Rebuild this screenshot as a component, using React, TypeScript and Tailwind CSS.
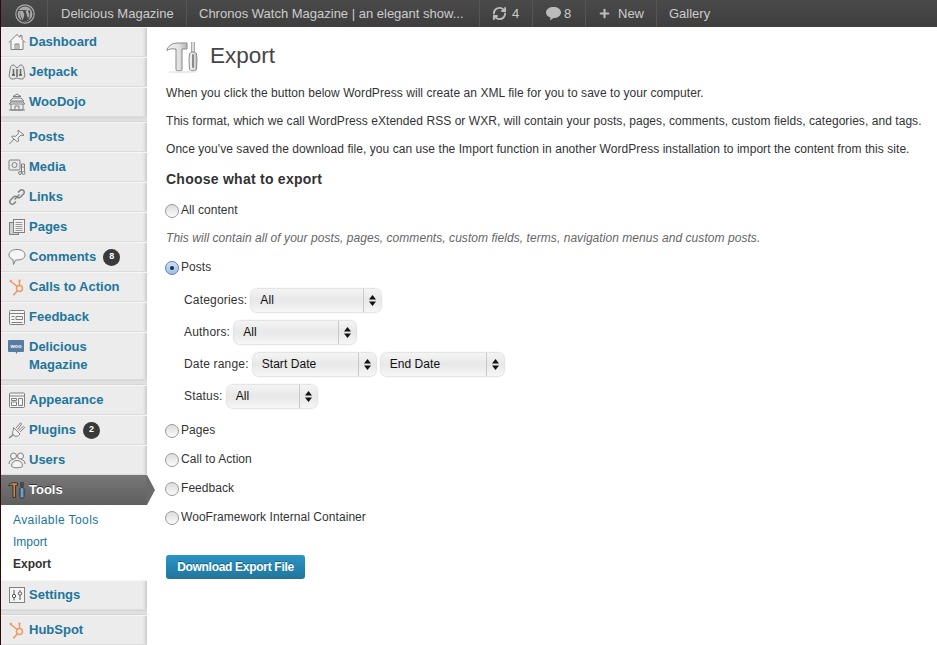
import { ReactNode } from "react";
import { RefreshCw, Plus } from "lucide-react";

const font = "[font-family:'Liberation_Sans',Arial,sans-serif]";

function WpLogo() {
  return (
    <svg width="20" height="20" viewBox="0 0 20 20" fill="none">
      <circle cx="10" cy="10" r="9.2" stroke="#a8a8a8" strokeWidth="1.2" />
      <circle cx="10" cy="10" r="7.4" fill="#a8a8a8" />
      <path d="M3.600 6.400 7.600 16.400 9.400 11 8 7l-1-.2V6h4.600v.8L10.500 7l2.600 8 1-3.500c.4-1.400 0-2.400-.5-3.300-.4-.7-.6-1.300.1-1.900.2-.2.400-.3.600-.3l1 1.600-1 8-3.800 1.800-3.800-.2z" fill="#464646" />
      <path d="M3 6.500h4.500" stroke="#464646" strokeWidth="0.8" />
    </svg>
  );
}

function Tools32() {
  return (
    <svg width="32" height="33" viewBox="0 0 32 33" fill="none">
      <defs>
        <linearGradient id="metal" x1="0" x2="1" y1="0" y2="0">
          <stop offset="0" stopColor="#f4f4f4" />
          <stop offset="0.6" stopColor="#e2e2e2" />
          <stop offset="1" stopColor="#b4b4b4" />
        </linearGradient>
      </defs>
      <path d="M1 9.500C3 5 7 3 12 3h9v6h-5v20.500c0 .8-.6 1.300-1.300 1.300h-3.400c-.7 0-1.300-.5-1.300-1.300V9H8C5.500 8.500 3 9 1 10.500z" fill="url(#metal)" stroke="#888" strokeWidth="1" />
      <path d="M25.800 2v10.500M28.200 2v10.500" stroke="#888" strokeWidth="1" />
      <path d="M23.500 14c0-1 1.500-2 3.500-2s3.500 1 3.500 2l.5 6-.5 9c0 1-1.500 1.800-3.500 1.800s-3.500-.8-3.500-1.800l-.5-9z" fill="url(#metal)" stroke="#888" strokeWidth="1" />
      <path d="M27 15v12" stroke="#8a8a8a" strokeWidth="2" strokeLinecap="round" />
      <ellipse cx="16" cy="32" rx="15" ry="0.800" fill="#e2e2e2" />
    </svg>
  );
}

const gs = { stroke: "#808080", strokeWidth: 1, fill: "none" };

const icons: Record<string, ReactNode> = {
  home: (
    <svg width="18" height="18" viewBox="0 0 18 18" {...gs}>
      <path d="M.8 9.500 9 1.500l3 2.900V2.500h2v3.800l3.200 3.200" fill="#f6f6f6" />
      <path d="M3 8v8.500h12V8" fill="#f6f6f6" />
      <path d="M7 16.500V11h4v5.500M9 11v5.500M3 16.500h12" />
    </svg>
  ),
  jetpack: (
    <svg width="18" height="18" viewBox="0 0 18 18" {...gs}>
      <path d="M2 7c0-3 1.200-5 3-5 1.500 0 2.500 1 3 2.500h2C10.500 3 11.500 2 13 2c1.800 0 3 2 3 5l1 6-2 3h-3l-3-1-3 1H3l-2-3z" fill="#e4e4e4" />
      <path d="M5.500 6v6M12.500 6v6M9 6v8" stroke="#666" strokeWidth="1.500" />
      <path d="M4 12h3M11 12h3" stroke="#555" strokeWidth="1.500" />
    </svg>
  ),
  dojo: (
    <svg width="18" height="18" viewBox="0 0 18 18" {...gs}>
      <path d="M5 3.500 9 1l4 2.500zM2 8l3-3h8l3 3zM1 11l2-2h12l2 2z" />
      <path d="M3 11v6h12v-6M7 17v-4h4v4M1 17h16" />
    </svg>
  ),
  pin: (
    <svg width="18" height="18" viewBox="0 0 18 18" {...gs}>
      <path d="m10 2 6 5-1 .8-2-.8-3 3 .5 3-1 1-6-5 1-1 3 .4 3-3-.5-2z" fill="#f0f0f0" />
      <path d="m6 11-4.500 5" />
    </svg>
  ),
  media: (
    <svg width="18" height="18" viewBox="0 0 18 18" {...gs}>
      <rect x="1" y="2" width="11" height="10" rx="1" fill="#e8e8e8" />
      <circle cx="6.500" cy="7" r="2.500" />
      <path d="M13.500 6h3M13.500 9h3M13.500 6v8.500M16.500 6v8" />
      <circle cx="12" cy="15" r="1.500" />
      <circle cx="15.500" cy="15" r="1.500" />
    </svg>
  ),
  links: (
    <svg width="18" height="18" viewBox="0 0 18 18" {...gs} strokeWidth={1.5}>
      <path d="M10 4.500 12 2.500c1-1 2.500-1 3.500 0s1 2.500 0 3.500l-3 3c-1 1-2.500 1-3.500 0" />
      <path d="M8 13.500 6 15.500c-1 1-2.500 1-3.500 0s-1-2.500 0-3.500l3-3c1-1 2.500-1 3.500 0" />
      <path d="m6.500 11.500 5-5" />
    </svg>
  ),
  pages: (
    <svg width="18" height="18" viewBox="0 0 18 18" {...gs}>
      <rect x="1.500" y="4.500" width="9" height="12" fill="#cfcfcf" />
      <rect x="5.500" y="1.500" width="11" height="13" fill="#f3f3f3" />
      <path d="M7.500 4.500h7M7.500 6.500h7M7.500 8.500h7M7.500 10.500h7M7.500 12.500h7" stroke="#999" />
    </svg>
  ),
  comments: (
    <svg width="18" height="18" viewBox="0 0 18 18" {...gs}>
      <path d="M9 1.500c4.500 0 8 2 8 5.500s-3.500 5-8 5H7.500l-2 4.500-.5-5C2.500 11 1 9 1 7c0-3.500 3.500-5.500 8-5.500z" fill="#f6f6f6" />
    </svg>
  ),
  feedback: (
    <svg width="18" height="18" viewBox="0 0 18 18" {...gs}>
      <rect x="1.500" y="2.500" width="15" height="14" rx="1" fill="#f5f5f5" />
      <path d="M1.500 5.500h15M3.500 8.500h3M3.500 11.500h3M8 8.500h6.500v3H8zM3.500 14.500h11" />
    </svg>
  ),
  appearance: (
    <svg width="18" height="18" viewBox="0 0 18 18" {...gs}>
      <rect x="1.500" y="2" width="15" height="14.500" rx="1" fill="#f5f5f5" />
      <path d="M1.500 5h15M3.500 7.500h5v2h-5zM3.500 11h5v3.500h-5zM10.500 7.500h4v7h-4z" />
    </svg>
  ),
  plugins: (
    <svg width="18" height="18" viewBox="0 0 18 18" {...gs}>
      <path d="m5.500 6.500 6.500 6.500-1.500 1.500c-1.500 1.200-3.500 1-4.800-.3s-1.600-3.300-.5-4.700z" fill="#f3f3f3" />
      <path d="m8 7 4.500-5.200 1.200 1.200L9.500 8.500M10.500 9.500l5-4.200 1.200 1.200L12 11" fill="#f3f3f3" />
      <path d="M5.500 13.500 1 17" strokeWidth="1.400" />
    </svg>
  ),
  users: (
    <svg width="18" height="18" viewBox="0 0 18 18" {...gs}>
      <circle cx="5.500" cy="5" r="3" fill="#f3f3f3" />
      <circle cx="12.500" cy="5" r="3" fill="#f3f3f3" />
      <path d="M1 13c0-3 2-4.500 4-4.500M17 13c0-3-2-4.500-4-4.500" />
      <path d="M3.500 15c0-3.500 2.500-5.500 5.500-5.500s5.500 2 5.500 5.500c0 1-2.500 1.800-5.500 1.800S3.500 16 3.500 15z" fill="#f3f3f3" />
    </svg>
  ),
  tools: (
    <svg width="18" height="18" viewBox="0 0 18 18" fill="none">
      <path d="M1 3.500C3 1.500 6 1.500 9.500 2v2.500H7.500v12H5v-12C3.500 4 2 4 1 5z" fill="#c98b55" stroke="#222" strokeWidth="0.8" />
      <path d="M13 1v5M15 1v5" stroke="#222" />
      <rect x="12" y="6.500" width="4" height="10.500" rx="1.500" fill="#6d9dc9" stroke="#222" strokeWidth="0.8" />
    </svg>
  ),
  settings: (
    <svg width="18" height="18" viewBox="0 0 18 18" {...gs}>
      <rect x="1.500" y="1.500" width="15" height="15" fill="#f5f5f5" />
      <path d="M6 4v4M6 12v2.500M12 4v1.500M12 9.500V14" stroke="#555" />
      <circle cx="6" cy="10" r="1.700" stroke="#555" />
      <circle cx="12" cy="7.500" r="1.700" stroke="#555" />
    </svg>
  ),
  hubspot: (
    <svg width="18" height="18" viewBox="0 0 18 18" fill="none" stroke="#ee9a63" strokeWidth="1.5">
      <circle cx="11.500" cy="10.500" r="3" />
      <path d="M3 3.500 9.300 8.600M11.500 7.500V3.500M9.400 12.700 6.500 16" />
      <circle cx="2.800" cy="3" r="1.300" fill="#ee9a63" stroke="none" />
      <circle cx="11.500" cy="2.800" r="1.200" fill="#ee9a63" stroke="none" />
      <circle cx="6" cy="16.500" r="1.100" fill="#ee9a63" stroke="none" />
    </svg>
  ),
  woo: (
    <svg width="16" height="15" viewBox="0 0 16 15">
      <path d="M1 0h14a1 1 0 0 1 1 1v10a1 1 0 0 1-1 1H9.500L8.500 14 7.500 12H1a1 1 0 0 1-1-1V1a1 1 0 0 1 1-1z" fill="#587da0" />
      <text x="8" y="8" fontSize="5.500" fontWeight="700" textAnchor="middle" fill="#fff" fontFamily="Liberation Sans, sans-serif">woo</text>
    </svg>
  ),
};

function Badge({ n }: { n: number }) {
  return (
    <span className="ml-[7px] flex h-[17px] w-[17px] items-center justify-center rounded-full bg-[#3a3a3a] text-[9px] font-bold text-white">
      {n}
    </span>
  );
}

function MenuItem({ icon, label, badge, tall }: { icon: string; label: ReactNode; badge?: number; tall?: boolean }) {
  return (
    <a
      className={`flex border-t border-t-[#f6f6f6] border-b border-b-[#dcdcdc] pl-[7px] ${
        tall ? "h-[48px] items-start pt-[5px]" : "h-[30px] items-center"
      }`}
    >
      <span className={`flex w-[21px] shrink-0 ${tall ? "pt-[2px]" : ""}`}>{icons[icon]}</span>
      <span className="text-[13px] leading-[18px] font-bold text-[#21759b]">{label}</span>
      {badge ? <Badge n={badge} /> : null}
    </a>
  );
}

function Sep() {
  return <div className="h-[5px] border-y border-y-[#d6d6d6] bg-[#e0e0e0]" />;
}

function Sidebar() {
  return (
    <aside className="z-10 flex w-[146px] shrink-0 flex-col bg-[#ececec] shadow-[inset_-4px_0_4px_-3px_#bbb]">
      <MenuItem icon="home" label="Dashboard" />
      <MenuItem icon="jetpack" label="Jetpack" />
      <MenuItem icon="dojo" label="WooDojo" />
      <Sep />
      <MenuItem icon="pin" label="Posts" />
      <MenuItem icon="media" label="Media" />
      <MenuItem icon="links" label="Links" />
      <MenuItem icon="pages" label="Pages" />
      <MenuItem icon="comments" label="Comments" badge={8} />
      <MenuItem icon="hubspot" label="Calls to Action" />
      <MenuItem icon="feedback" label="Feedback" />
      <MenuItem icon="woo" label={<>Delicious<br />Magazine</>} tall />
      <Sep />
      <MenuItem icon="appearance" label="Appearance" />
      <MenuItem icon="plugins" label="Plugins" badge={2} />
      <MenuItem icon="users" label="Users" />
      <div className="relative flex h-[30px] items-center bg-gradient-to-b from-[#777] to-[#5f5f5f] pl-[7px]">
        <span className="flex w-[21px]">{icons.tools}</span>
        <span className="text-[13px] font-bold text-white [text-shadow:0_-1px_0_#333]">Tools</span>
        <span className="absolute top-0 left-full h-0 w-0 border-y-[15px] border-l-[8px] border-y-transparent border-l-[#6b6b6b]" />
      </div>
      <div className="flex h-[75px] flex-col bg-white pt-[4px] pl-[12px] text-[12px] leading-[22px]">
        <a className="tracking-[0.4px] text-[#21759b]">Available Tools</a>
        <a className="text-[#21759b]">Import</a>
        <a className="font-bold text-[#333]">Export</a>
      </div>
      <MenuItem icon="settings" label="Settings" />
      <Sep />
      <MenuItem icon="hubspot" label="HubSpot" />
    </aside>
  );
}

function TopItem({ children, className = "" }: { children: ReactNode; className?: string }) {
  return (
    <div className={`flex h-full items-center border-r border-r-[#555] ${className}`}>{children}</div>
  );
}

function TopBar() {
  return (
    <header className="flex h-[27px] shrink-0 bg-gradient-to-b from-[#4a4a4a] to-[#3e3e3e] text-[13px] text-[#cccccc]">
      <TopItem className="w-[47px] justify-center pl-[1px]"><WpLogo /></TopItem>
      <TopItem className="w-[139px] pl-[13px]">Delicious Magazine</TopItem>
      <TopItem className="w-[293px] pl-[12px]">Chronos Watch Magazine | an elegant show...</TopItem>
      <TopItem className="w-[53px] gap-[5px] pl-[12px]">
        <RefreshCw size={15} strokeWidth={3} color="#bbb" />
        <span>4</span>
      </TopItem>
      <TopItem className="w-[53px] gap-[3px] pl-[13px]">
        <svg width="15" height="15" viewBox="0 0 15 15">
          <path d="M7.500 1C11.500 1 15 3 15 6.500S11.500 12 7.500 12L4 14.500 4.500 11.500C2 11 0 9 0 6.500 0 3 3.500 1 7.500 1z" fill="#bbb" />
        </svg>
        <span>8</span>
      </TopItem>
      <TopItem className="w-[71px] gap-[7px] pl-[12px]">
        <Plus size={13} strokeWidth={4} color="#bbb" />
        <span>New</span>
      </TopItem>
      <div className="flex items-center pl-[12px]">Gallery</div>
    </header>
  );
}

function Radio({ label, checked }: { label: string; checked?: boolean }) {
  return (
    <label className="flex items-center text-[12px] leading-[16px] text-[#333]">
      {checked ? (
        <span className="mr-[2px] -ml-[1px] flex h-[14px] w-[14px] translate-y-[1px] items-center justify-center rounded-full border border-[#5b83b0] bg-gradient-to-b from-[#cfe0f5] to-[#9cc0ec]">
          <span className="h-[4px] w-[4px] rounded-full bg-[#1c2f4a]" />
        </span>
      ) : (
        <span className="mr-[2px] -ml-[1px] h-[14px] w-[14px] translate-y-[1px] rounded-full border border-[#9a9a9a] bg-gradient-to-b from-[#dcdcdc] to-[#fbfbfb]" />
      )}
      {label}
    </label>
  );
}

function Select({ value, className }: { value: string; className: string }) {
  return (
    <div
      className={`flex h-[23px] items-center rounded-[6px] bg-gradient-to-b from-[#f4f4f4] via-[#e8e8e8] to-[#f6f6f6] pl-[9px] text-[12px] text-[#111] shadow-[0_0_2px_#999] ${className}`}
    >
      <span className="flex-1">{value}</span>
      <span className="flex h-full w-[18px] items-center justify-center border-l border-l-[#c8c8c8]">
        <svg width="7" height="11" viewBox="0 0 7 11" fill="#111">
          <path d="M3.500 0 7 4.500H0zM3.500 11 0 6.500h7z" />
        </svg>
      </span>
    </div>
  );
}

function Row({ label, children }: { label: string; children: ReactNode }) {
  return (
    <div className="flex h-[32px] items-center gap-[4px] text-[12px] text-[#333]">
      <span className="tracking-[0.18px]">{label}</span>
      {children}
    </div>
  );
}

export default function App() {
  return (
    <div className={`flex h-[645px] w-[937px] flex-col overflow-hidden border-l border-l-[#2a0a0a] bg-white ${font}`}>
      <TopBar />
      <div className="flex min-h-0 flex-1">
        <Sidebar />
        <main className="flex-1 pl-[19px] text-[12px] tracking-[0.055px] text-[#333]">
          <div className="flex items-center gap-[12px] pt-[13px]">
            <Tools32 />
            <h1 className="mb-[2px] text-[22.5px] leading-[30px] tracking-normal text-[#464646]">Export</h1>
          </div>
          <p className="mt-[12px] leading-[16px]">When you click the button below WordPress will create an XML file for you to save to your computer.</p>
          <p className="mt-[12px] leading-[16px]">This format, which we call WordPress eXtended RSS or WXR, will contain your posts, pages, comments, custom fields, categories, and tags.</p>
          <p className="mt-[12px] leading-[16px]">Once you've saved the download file, you can use the Import function in another WordPress installation to import the content from this site.</p>
          <h3 className="mt-[13px] text-[14px] leading-[18px] font-bold tracking-[0.25px] text-[#333]">Choose what to export</h3>
          <div className="mt-[14px]"><Radio label="All content" /></div>
          <p className="mt-[12px] leading-[16px] text-[#666] italic">This will contain all of your posts, pages, comments, custom fields, terms, navigation menus and custom posts.</p>
          <div className="mt-[13px]"><Radio label="Posts" checked /></div>
          <div className="mt-[9px] ml-[18px] flex flex-col">
            <Row label="Categories:"><Select value="All" className="w-[130px]" /></Row>
            <Row label="Authors:"><Select value="All" className="w-[122px]" /></Row>
            <Row label="Date range:">
              <Select value="Start Date" className="w-[123px]" />
              <Select value="End Date" className="ml-[1px] w-[123px]" />
            </Row>
            <Row label="Status:"><Select value="All" className="w-[90px]" /></Row>
          </div>
          <div className="mt-[10px] flex flex-col gap-[13px]">
            <Radio label="Pages" />
            <Radio label="Call to Action" />
            <Radio label="Feedback" />
            <Radio label="WooFramework Internal Container" />
          </div>
          <button className="mt-[30px] h-[24px] w-[139px] rounded-[3px] bg-gradient-to-b from-[#2a95c5] to-[#21759b] text-[12px] font-bold tracking-[-0.3px] text-white [text-shadow:0_-1px_0_rgba(0,0,0,0.3)]">
            Download Export File
          </button>
        </main>
      </div>
    </div>
  );
}
